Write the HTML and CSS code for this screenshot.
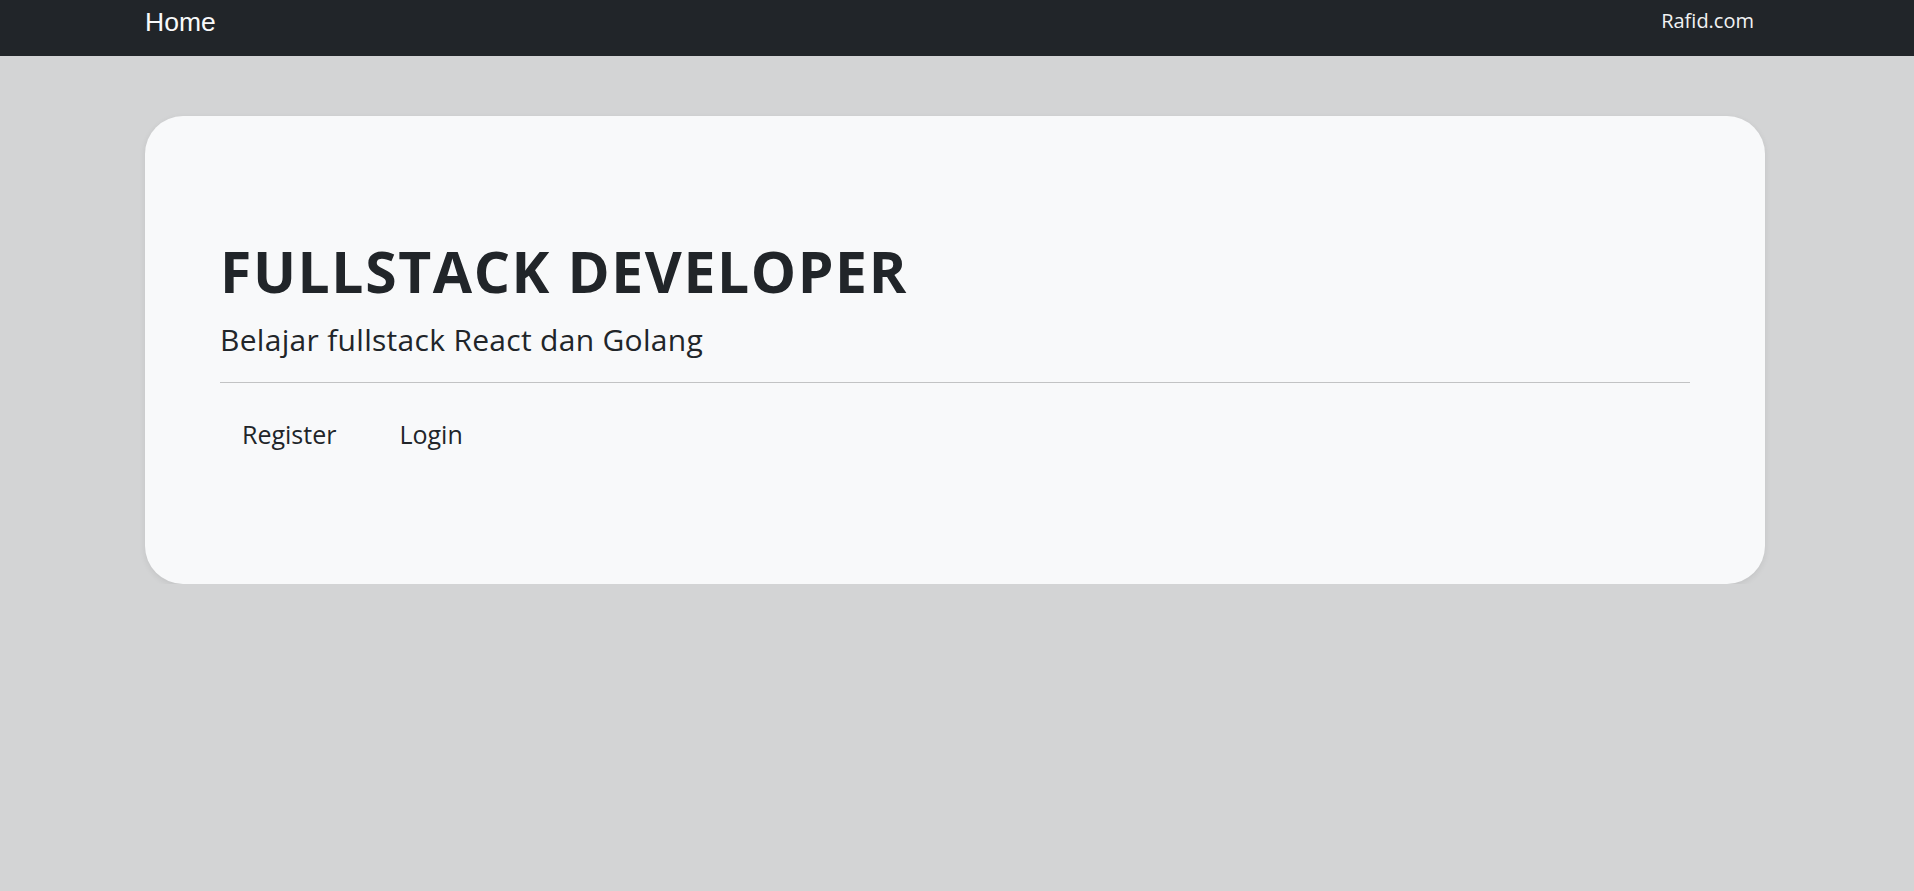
FILE: index.html
```html
<!DOCTYPE html>
<html lang="en">
<head>
    <meta charset="UTF-8">
    <meta name="viewport" content="width=device-width, initial-scale=1.0">
    <title>Fullstack Developer</title>
    <link rel="stylesheet" href="styles.css">
</head>
<body>
    <nav class="navbar">
        <div class="container navbar-inner">
            <a class="navbar-brand" href="#">Home</a>
            <a class="navbar-text" href="#">Rafid.com</a>
        </div>
    </nav>

    <main class="container">
        <div class="hero">
            <h1 class="hero-title">FULLSTACK DEVELOPER</h1>
            <p class="hero-lead">Belajar fullstack React dan Golang</p>
            <hr class="hero-rule">
            <ul class="hero-nav">
                <li><a href="#">Register</a></li>
                <li><a href="#">Login</a></li>
            </ul>
        </div>
    </main>
</body>
</html>
```

FILE: styles.css
```css
body {
    margin: 0;
    padding: 0 4px 0 0;
    background: #d3d4d5;
    color: #212529;
    font-family: "Open Sans", "Noto Sans", sans-serif;
}
a {
    color: inherit;
    text-decoration: none;
}
.container {
    max-width: 1620px;
    margin: 0 auto;
}
.navbar {
    background: #212529;
    height: 56px;
    margin-right: -4px;
    padding-right: 4px;
}
.navbar-inner {
    display: flex;
    justify-content: space-between;
    align-items: flex-start;
    padding-top: 7px;
}
.navbar-brand {
    font-family: "Liberation Sans", Arial, sans-serif;
    font-size: 26.5px;
    line-height: 30px;
    color: #f8f9fa;
}
.navbar-text {
    font-size: 20px;
    line-height: 30px;
    color: #f1f2f3;
    margin-top: -1px;
    margin-right: 11px;
}
.hero {
    margin-top: 60px;
    height: 468px;
    box-sizing: border-box;
    padding: 121px 75px 0;
    background: #f8f9fa;
    border-radius: 38px;
    box-shadow: 0 2px 6px rgba(0, 0, 0, 0.08);
}
.hero-title {
    margin: 0 0 12px;
    font-size: 57px;
    line-height: 1.2;
    font-weight: 700;
    letter-spacing: 1.6px;
}
.hero-lead {
    margin: 0;
    font-size: 30px;
    line-height: 1.5;
    font-weight: 400;
    letter-spacing: 0.3px;
}
.hero-rule {
    margin: 20px 0 0;
    border: 0;
    border-top: 1px solid #c2c3c4;
}
.hero-nav {
    list-style: none;
    margin: 33px 0 0;
    padding: 0 0 0 22px;
    display: flex;
    gap: 63px;
    font-size: 25px;
    line-height: 1.5;
}
```
